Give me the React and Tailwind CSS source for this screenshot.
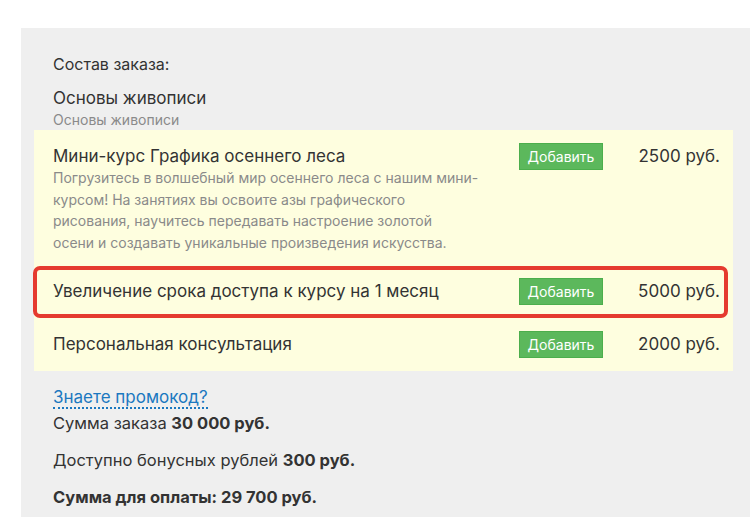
import React from "react";

const items = [
  {
    title: "Мини-курс Графика осеннего леса",
    desc: [
      "Погрузитесь в волшебный мир осеннего леса с нашим мини-",
      "курсом! На занятиях вы освоите азы графического",
      "рисования, научитесь передавать настроение золотой",
      "осени и создавать уникальные произведения искусства.",
    ],
    price: "2500 руб.",
  },
  { title: "Увеличение срока доступа к курсу на 1 месяц", price: "5000 руб.", marked: true },
  { title: "Персональная консультация", price: "2000 руб." },
];

function Row({ item }) {
  return (
    <div className={`relative flex items-start pl-[19px] pr-[13px] pt-[13px] ${item.desc ? "pb-[12px]" : "pb-[13px]"}`}>
      <div className="w-[440px] shrink-0">
        <div className="text-[17px] leading-[22px] text-[#333] pt-[2px]">{item.title}</div>
        {item.desc && (
          <div className="text-[14px] leading-[21.5px] text-[#8a8a8a]">
            {item.desc.map((l) => (
              <div key={l} className="whitespace-nowrap">{l}</div>
            ))}
          </div>
        )}
      </div>
      <button className="ml-[26px] h-[27px] w-[84px] shrink-0 bg-[#5cb85c] border border-[#4cae4c] text-white text-[14px] leading-none">
        Добавить
      </button>
      <div className="flex-1 text-right text-[17px] leading-[22px] text-[#333] pt-[2px]">{item.price}</div>
      {item.marked && (
        <div className="pointer-events-none absolute left-[-1px] right-[5px] top-[1px] bottom-0 rounded-[7px] border-[4px] border-[#e53a2f]" />
      )}
    </div>
  );
}

export default function App() {
  return (
    <div className="w-[750px] h-[517px] bg-white pt-[28px] pl-[21px] overflow-hidden font-['Inter','Liberation_Sans',sans-serif]">
      <div className="h-full bg-[#efefef] pl-[13px] pr-[17px] pt-[25px]">
        <div className="pl-[19px] text-[16px] leading-[22px] text-[#333]">Состав заказа:</div>
        <div className="pl-[19px] mt-[12px] text-[17px] leading-[22px] text-[#333]">Основы живописи</div>
        <div className="pl-[19px] mt-[1px] text-[14px] leading-[20px] text-[#8a8a8a]">Основы живописи</div>

        <div className="bg-[#fefedf]">
          {items.map((it) => (
            <Row key={it.title} item={it} />
          ))}
        </div>

        <div className="pl-[19px] pt-[14px] text-[16.5px] text-[#333]">
          <a className="text-[17px] text-[#1b78c0] border-b-2 border-dotted border-[#1b78c0] leading-[19px] inline-block">
            Знаете промокод?
          </a>
          <div className="leading-[22px] mt-[2px]">
            Сумма заказа <b>30 000 руб.</b>
          </div>
          <div className="leading-[22px] mt-[15px]">
            Доступно бонусных рублей <b>300 руб.</b>
          </div>
          <div className="leading-[22px] mt-[15px] font-bold">Сумма для оплаты: 29 700 руб.</div>
        </div>
      </div>
    </div>
  );
}
